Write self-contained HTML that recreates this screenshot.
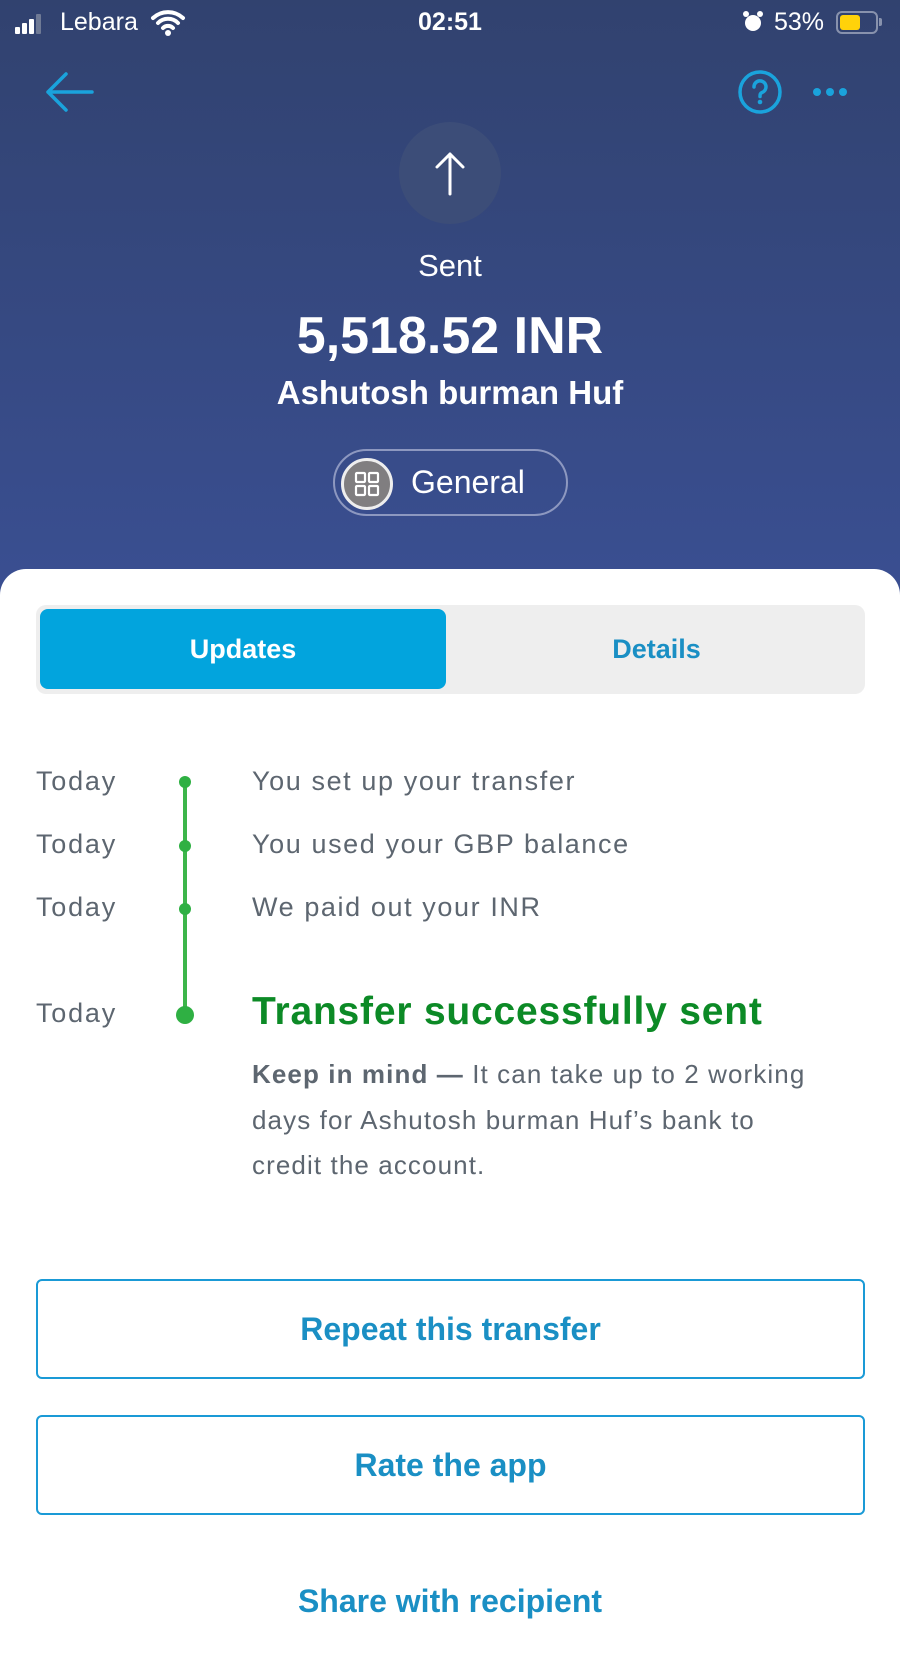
<!DOCTYPE html>
<html><head><meta charset="utf-8"><style>
*{margin:0;padding:0;box-sizing:border-box}
body{width:900px;height:1600px;overflow:hidden;font-family:"Liberation Sans",sans-serif;background:#fff;position:relative}
.hdr{position:absolute;left:0;top:0;width:900px;height:600px;background:linear-gradient(#31426f,#3a4f92)}
.a{position:absolute}
.c{position:absolute;left:0;width:900px;text-align:center;color:#fff}
.sheet{position:absolute;left:0;top:569px;width:900px;height:1100px;background:#fff;border-radius:26px 26px 0 0}
.today{position:absolute;left:36px;font-size:27px;color:#5d6670;letter-spacing:1.8px}
.ev{position:absolute;left:252px;font-size:27px;color:#5d6670;letter-spacing:1.6px}
.btn{position:absolute;left:36px;width:829px;height:100px;border:2px solid #1a9ad6;border-radius:6px;color:#1a8fc4;font-size:32px;font-weight:bold;text-align:center;line-height:96px}
</style></head><body>
<div class="hdr"></div>
<div class="a" style="left:15px;top:14px;width:28px;height:20px">
<div class="a" style="left:0;top:13px;width:5px;height:7px;background:#fff;border-radius:1px"></div>
<div class="a" style="left:7px;top:9px;width:5px;height:11px;background:#fff;border-radius:1px"></div>
<div class="a" style="left:14px;top:5px;width:5px;height:15px;background:#fff;border-radius:1px"></div>
<div class="a" style="left:21px;top:0;width:5px;height:20px;background:#6f7a95;border-radius:1px"></div>
</div>
<div class="a" style="left:60px;top:8px;color:#fff;font-size:25px">Lebara</div>
<svg class="a" style="left:150px;top:8px" width="36" height="28" viewBox="0 0 36 28"><path d="M3 10a22 22 0 0 1 30 0M8 15a14 14 0 0 1 20 0M13 20a7 7 0 0 1 10 0" stroke="#fff" stroke-width="4" fill="none" stroke-linecap="round"/><circle cx="18" cy="25" r="3" fill="#fff"/></svg>
<div class="c" style="top:8px;font-size:25px;font-weight:bold">02:51</div>
<svg class="a" style="left:742px;top:10px" width="22" height="24" viewBox="0 0 22 24"><circle cx="11" cy="13" r="8" fill="#fff"/><circle cx="4" cy="4" r="3" fill="#fff"/><circle cx="18" cy="4" r="3" fill="#fff"/></svg>
<div class="a" style="left:774px;top:8px;color:#fff;font-size:25px">53%</div>
<div class="a" style="left:836px;top:11px;width:42px;height:23px;border:2px solid #8892ad;border-radius:6px"><div style="position:absolute;left:2px;top:2px;width:20px;height:15px;background:#ffd20a;border-radius:3px"></div></div>
<div class="a" style="left:879px;top:18px;width:3px;height:8px;background:#8892ad;border-radius:0 2px 2px 0"></div>
<svg class="a" style="left:44px;top:70px" width="50" height="44" viewBox="0 0 50 44"><path d="M48 22H4M22 4L4 22l18 18" stroke="#1aa3dc" stroke-width="3.5" fill="none" stroke-linecap="round" stroke-linejoin="round"/></svg>
<svg class="a" style="left:737px;top:69px" width="46" height="46" viewBox="0 0 46 46"><circle cx="23" cy="23" r="20" stroke="#1aa3dc" stroke-width="3.5" fill="none"/><path d="M17 18a6 6 0 1 1 8 5.5c-2 1-2 2-2 4" stroke="#1aa3dc" stroke-width="3.5" fill="none" stroke-linecap="round"/><circle cx="23" cy="33" r="2.3" fill="#1aa3dc"/></svg>
<div class="a" style="left:813px;top:88px"><span style="position:absolute;left:0;width:8px;height:8px;border-radius:50%;background:#1aa3dc"></span><span style="position:absolute;left:13px;width:8px;height:8px;border-radius:50%;background:#1aa3dc"></span><span style="position:absolute;left:26px;width:8px;height:8px;border-radius:50%;background:#1aa3dc"></span></div>
<div class="a" style="left:399px;top:122px;width:102px;height:102px;border-radius:50%;background:#3c4d78"></div>
<svg class="a" style="left:425px;top:148px" width="50" height="50" viewBox="0 0 50 50"><path d="M25 46V6M12 19L25 6l13 13" stroke="#fff" stroke-width="3" fill="none" stroke-linecap="round" stroke-linejoin="round"/></svg>
<div class="c" style="top:248px;font-size:31px">Sent</div>
<div class="c" style="top:306px;font-size:52px;font-weight:bold">5,518.52 INR</div>
<div class="c" style="top:374px;font-size:33px;font-weight:bold">Ashutosh burman Huf</div>
<div class="a" style="left:333px;top:449px;width:235px;height:67px;border:2px solid #8d98c0;border-radius:34px"></div>
<div class="a" style="left:341px;top:458px;width:52px;height:52px;border-radius:50%;background:#807e80;border:3px solid #eee"></div>
<svg class="a" style="left:354px;top:471px" width="26" height="26" viewBox="0 0 26 26" fill="none" stroke="#fff" stroke-width="2.2"><rect x="2" y="2" width="9" height="9" rx="1"/><rect x="15" y="2" width="9" height="9" rx="1"/><rect x="2" y="15" width="9" height="9" rx="1"/><rect x="15" y="15" width="9" height="9" rx="1"/></svg>
<div class="a" style="left:411px;top:464px;color:#fff;font-size:32px">General</div>
<div class="sheet"></div>
<div class="a" style="left:36px;top:605px;width:829px;height:89px;background:#eeeeee;border-radius:10px"></div>
<div class="a" style="left:40px;top:609px;width:406px;height:80px;background:#02a4dd;border-radius:8px;color:#fff;font-size:27px;font-weight:bold;text-align:center;line-height:80px">Updates</div>
<div class="a" style="left:450px;top:609px;width:413px;height:80px;color:#1a8fc4;font-size:27px;font-weight:bold;text-align:center;line-height:80px">Details</div>
<div class="a" style="left:183px;top:782px;width:4px;height:233px;background:#3db54a"></div>
<div class="a" style="left:179px;top:776px;width:12px;height:12px;border-radius:50%;background:#2fb043"></div>
<div class="a" style="left:179px;top:840px;width:12px;height:12px;border-radius:50%;background:#2fb043"></div>
<div class="a" style="left:179px;top:903px;width:12px;height:12px;border-radius:50%;background:#2fb043"></div>
<div class="a" style="left:176px;top:1006px;width:18px;height:18px;border-radius:50%;background:#2fb043"></div>
<div class="today" style="top:766px">Today</div>
<div class="today" style="top:829px">Today</div>
<div class="today" style="top:892px">Today</div>
<div class="today" style="top:998px">Today</div>
<div class="ev" style="top:766px">You set up your transfer</div>
<div class="ev" style="top:829px">You used your GBP balance</div>
<div class="ev" style="top:892px">We paid out your INR</div>
<div class="a" style="left:252px;top:990px;font-size:39px;font-weight:bold;color:#0c8a26;letter-spacing:0.8px">Transfer successfully sent</div>
<div class="a" style="left:252px;top:1052px;width:640px;font-size:26px;line-height:45.5px;color:#5d6670;letter-spacing:1.1px"><b>Keep in mind —</b> It can take up to 2 working<br>days for Ashutosh burman Huf’s bank to<br>credit the account.</div>
<div class="btn" style="top:1279px">Repeat this transfer</div>
<div class="btn" style="top:1415px">Rate the app</div>
<div class="c" style="top:1583px;color:#1a8fc4;font-size:32px;font-weight:bold">Share with recipient</div>
</body></html>
